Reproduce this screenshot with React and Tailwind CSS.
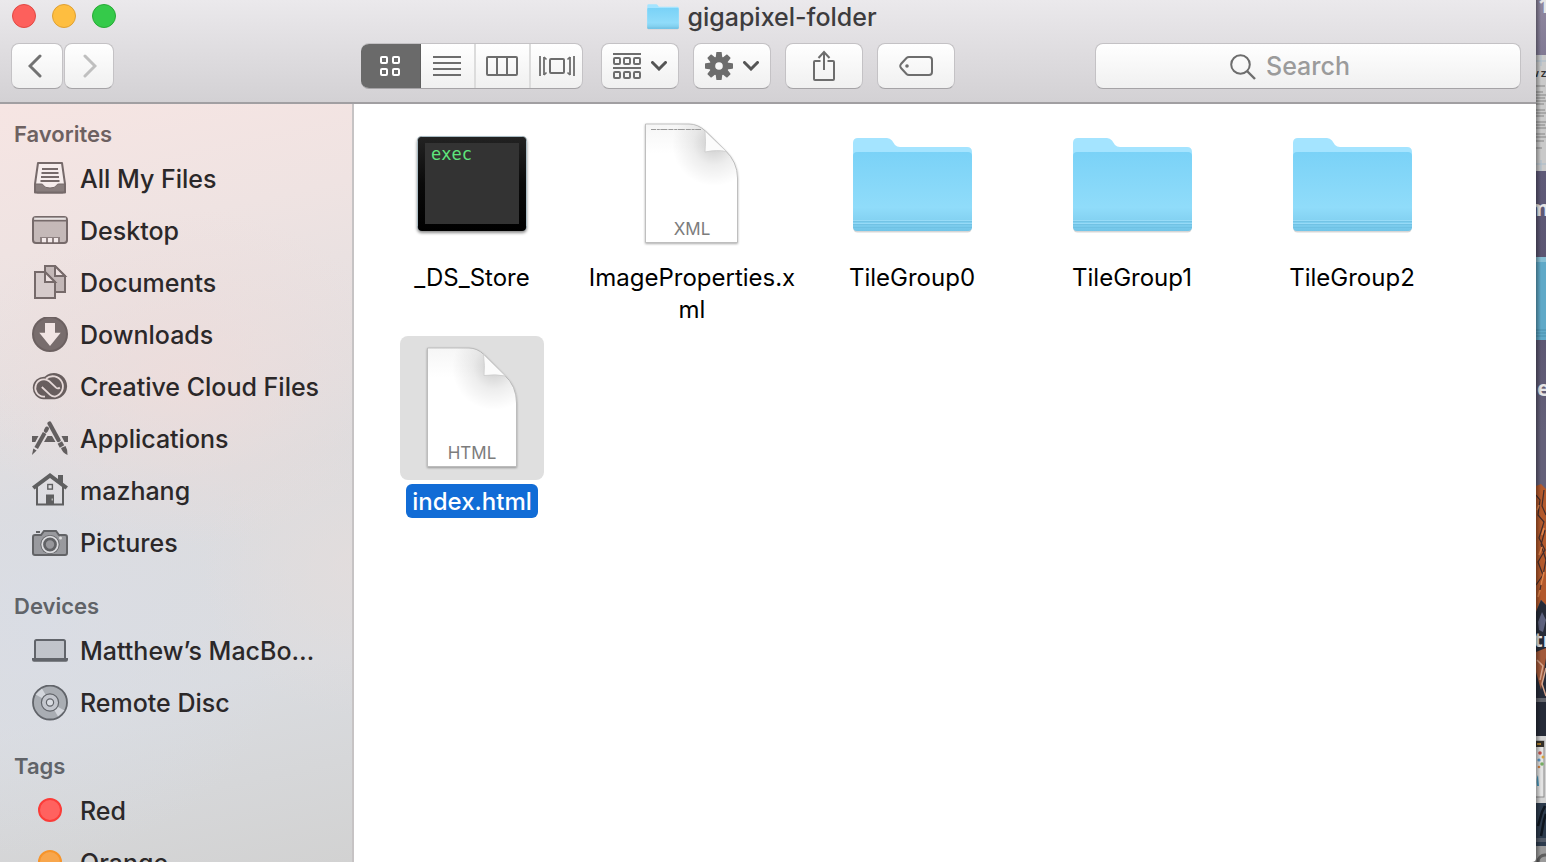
import React from "react";

const ink = "#6d6d6d";

/* ---------- Toolbar icons ---------- */

function Chevron({ dir = "down", className }) {
  const points = { left: "12,2 2,12 12,22", right: "2,2 12,12 2,22" };
  if (dir === "down") {
    return (
      <svg viewBox="0 0 16 10" className="h-[10px] w-4" fill="none" stroke="#555" strokeWidth="3">
        <polyline points="1.5,1.5 8,8 14.5,1.5" strokeLinecap="round" />
      </svg>
    );
  }
  return (
    <svg viewBox="0 0 14 24" className={`h-6 w-[14px] ${className}`} fill="none" stroke="currentColor" strokeWidth="3" strokeLinecap="round">
      <polyline points={points[dir]} />
    </svg>
  );
}

const IconsView = () => (
  <svg viewBox="0 0 20 20" className="size-5" fill="none" stroke="#fff" strokeWidth="2">
    {[1, 13].map((y) => [1, 13].map((x) => <rect key={`${x}${y}`} x={x} y={y} width="6" height="6" rx="1" />))}
  </svg>
);

const ListView = () => (
  <svg viewBox="0 0 28 20" className="h-5 w-7" stroke={ink} strokeWidth="2">
    <path d="M0 1H28M0 7H28M0 13H28M0 19H28" />
  </svg>
);

const ColumnsView = () => (
  <svg viewBox="0 0 32 20" className="h-5 w-8" fill="none" stroke={ink} strokeWidth="2">
    <rect x="1" y="1" width="30" height="18" rx="1" />
    <path d="M11 1V19M21 1V19" />
  </svg>
);

const FlowView = () => (
  <svg viewBox="0 0 36 20" className="h-5 w-9" fill="none" stroke={ink} strokeWidth="2">
    <rect x="11" y="3" width="14" height="14" rx="1" />
    <path d="M1 0V20M35 0V20" strokeWidth="1.8" />
    <path d="M5 1V19M31 1V19" strokeWidth="1.8" />
    <path d="M5 1L7.500 3.500M5 19L7.500 16.500M31 1L28.500 3.500M31 19L28.500 16.500" strokeWidth="1.6" />
  </svg>
);

const ArrangeIcon = () => (
  <svg viewBox="0 0 28 28" className="size-7" fill="none" stroke={ink} strokeWidth="2">
    <path d="M0 2H28M0 16H28" />
    {[6, 20].map((y) => [1, 11, 21].map((x) => <rect key={`${x}-${y}`} x={x} y={y} width="6" height="6" rx="1" />))}
  </svg>
);

const GearIcon = () => (
  <svg viewBox="0 0 28 28" className="size-7">
    <g fill={ink}>
      {[0, 45, 90, 135].map((a) => (
        <path key={a} d="M11.3 0.6Q11.4 0 12 0H16Q16.6 0 16.7 .6L17.4 6V22L16.7 27.4Q16.6 28 16 28H12Q11.4 28 11.3 27.4L10.6 22V6Z" transform={`rotate(${a} 14 14)`} />
      ))}
      <circle cx="14" cy="14" r="9.500" />
    </g>
    <circle cx="14" cy="14" r="3.8" fill="#f7f7f7" />
  </svg>
);

const ShareIcon = () => (
  <svg viewBox="0 0 24 32" className="h-8 w-6" fill="none" stroke={ink} strokeWidth="2">
    <path d="M8.5 11H3Q2 11 2 12V29Q2 30 3 30H21Q22 30 22 29V12Q22 11 21 11H15.500" />
    <path d="M12 20V2.500M6.500 8L12 2L17.500 8" />
  </svg>
);

const TagIcon = () => (
  <svg viewBox="0 0 34 20" className="h-5 w-[34px]" fill="none" stroke={ink} strokeWidth="2">
    <path d="M10 1H30Q33 1 33 4V16Q33 19 30 19H10Q8.500 19 7.500 18L2 12Q.5 10 2 8L7.500 2Q8.500 1 10 1Z" />
    <circle cx="8" cy="10" r="1.8" fill={ink} stroke="none" />
  </svg>
);

const SearchIcon = () => (
  <svg viewBox="0 0 26 26" className="size-[26px] shrink-0" fill="none" stroke={ink} strokeWidth="2">
    <circle cx="10.500" cy="10.500" r="9.300" />
    <path d="M17 17L25 25" strokeWidth="2.400" />
  </svg>
);

/* ---------- Sidebar icons ---------- */

function Glyph({ children }) {
  return (
    <svg viewBox="0 0 36 36" className="size-9 shrink-0" fill="none" stroke="currentColor" strokeWidth="2">
      {children}
    </svg>
  );
}

const AllFilesIcon = () => (
  <Glyph>
    <path d="M6 2H30L33 23V31.500H3V23Z" fill="#fff" fillOpacity=".35" strokeLinejoin="round" />
    <path d="M3 23H9.500Q11 23 11.500 24.500Q13 27 18 27Q23 27 24.500 24.500Q25 23 26.500 23H33L32.500 30Q32.300 32 30.500 32H5.500Q3.700 32 3.500 30Z" fill="currentColor" fillOpacity=".85" strokeWidth="1" />
    <path d="M10 8H26M9.500 12H26.500M9 16H27M8.500 20H27.500" />
  </Glyph>
);

const DesktopIcon = () => (
  <Glyph>
    <rect x="1" y="4" width="34" height="26" rx="3" fill="currentColor" fillOpacity=".35" />
    <path d="M2 5.500H34" stroke="#fff" strokeOpacity=".6" />
    <path d="M1 7.800H35" strokeWidth="1.600" />
    <rect x="8" y="24" width="20" height="6" fill="currentColor" stroke="none" fillOpacity=".7" />
    <path d="M10 25H14V29.300H10ZM16 25H20V29.300H16ZM22 25H26V29.300H22Z" fill="#f3eaea" stroke="none" />
  </Glyph>
);

const DocumentsIcon = () => (
  <Glyph>
    <path d="M13 1H23L33 11V27H13Z" fill="currentColor" fillOpacity=".35" />
    <path d="M23 1V11H33Z" fill="#efe3e3" />
    <path d="M3 7H13L23 17V33H3Z" fill="#d6cbcb" />
    <path d="M13 7V17H23Z" fill="#efe3e3" />
  </Glyph>
);

const DownloadsIcon = () => (
  <Glyph>
    <circle cx="18" cy="17" r="17" fill="currentColor" fillOpacity=".9" />
    <path d="M13 6H23V15.700H28.700L18 29L7.300 15.700H13Z" fill="#f1e5e4" stroke="none" />
  </Glyph>
);

const CloudIcon = () => (
  <Glyph>
    <path d="M11.500 30.300A11.200 11.200 0 1 1 12.700 7.700A13.200 13.200 0 1 1 23 30.300Z" fill="currentColor" stroke="none" />
    <path d="M13 27.600H11.500A8.600 8.600 0 1 1 17.300 12.300L24 18.600Q26 20.300 27.800 18.500M14 9.700A10.300 10.300 0 1 1 23 27.600Q20 27.600 18.200 25.900L9.800 18" stroke="#e6d9d8" strokeWidth="1.800" />
  </Glyph>
);

const ApplicationsIcon = () => (
  <Glyph>
    <path d="M0 15H6.500L3.300 21H0ZM15.500 15H20L23.500 21H12ZM29.500 15H36V21H32.500Z" fill="currentColor" stroke="none" />
    <path d="M17.500 2.500L26.500 19" strokeWidth="4.200" strokeLinecap="round" />
    <path d="M27.800 21.500L30 25.500" strokeWidth="5" />
    <path d="M29 27L33.500 25Q36 29 35.500 34Q30.500 32 29 27Z" fill="currentColor" stroke="none" />
    <path d="M15 7.500L13.800 9.800" strokeWidth="4" strokeLinecap="round" />
    <path d="M12.600 12L4.200 27" strokeWidth="4" />
    <path d="M1.300 27.500L4.600 29.500L0 34Z" fill="currentColor" stroke="none" />
  </Glyph>
);

const HomeIcon = () => (
  <Glyph>
    <path d="M5 14V31.500H31V14" />
    <path d="M18 0L36 13.500L33.500 16.500L18 5L2.500 16.500L0 13.500Z" fill="currentColor" stroke="none" />
    <path d="M26 2H31V11.500L26 7.500Z" fill="currentColor" stroke="none" />
    <rect x="15.800" y="11.500" width="4.600" height="4.600" strokeWidth="1.400" />
    <path d="M14 21.500H22V31.500H14Z" fill="currentColor" stroke="none" />
    <path d="M20.200 25.500V27.500" stroke="#ddd" strokeWidth="1" />
  </Glyph>
);

const CameraIcon = () => (
  <Glyph>
    <path d="M3 10H9L12 6H24L27 10H33Q35 10 35 12V28Q35 30 33 30H3Q1 30 1 28V12Q1 10 3 10Z" fill="currentColor" fillOpacity=".55" />
    <path d="M4 7H8" />
    <circle cx="18" cy="19.500" r="9.600" fill="currentColor" stroke="none" />
    <circle cx="18" cy="19.500" r="7.800" stroke="#dcdcdf" strokeWidth="1.800" />
    <circle cx="18" cy="19.500" r="5" fill="#97979b" strokeWidth="1.600" />
    <circle cx="28.500" cy="13" r="1.500" fill="#ddd" stroke="none" />
  </Glyph>
);

const LaptopIcon = () => (
  <Glyph>
    <rect x="3" y="7" width="30" height="20" rx="1.500" fill="currentColor" fillOpacity=".2" />
    <path d="M0 25H36V26.500Q36 28.700 34 28.700H2Q0 28.700 0 26.500Z" fill="currentColor" stroke="none" />
  </Glyph>
);

const DiscIcon = () => (
  <Glyph>
    <circle cx="18" cy="17.500" r="17" fill="#a9adb3" strokeWidth="1.800" />
    <path d="M18 17.500L3.500 9.500L10 3.500ZM18 17.500L32.500 25.500L26 31.500Z" fill="#d3d6dc" stroke="none" />
    <circle cx="18" cy="17.500" r="8.600" fill="#c3c6cd" strokeWidth="1.200" />
    <circle cx="18" cy="17.500" r="3.600" fill="#d9dce2" strokeWidth="1.200" />
  </Glyph>
);

const tagTone = {
  red: "border-[#fb3c38] bg-[#ff625f]",
  orange: "border-[#f7942a] bg-[#f8a64c]",
};

function TagDot({ tone }) {
  return (
    <span className="flex w-9 shrink-0 justify-center pb-[2px]">
      <span className={`size-6 rounded-full border-2 ${tagTone[tone]}`} />
    </span>
  );
}

/* ---------- File icons ---------- */

function FolderShape({ viewBox, className, id }) {
  return (
    <svg viewBox={viewBox} className={className}>
      <defs>
        <linearGradient id={id} x1="0" y1="0" x2="0" y2="1">
          <stop offset="0" stopColor="#7ad2f7" />
          <stop offset=".7" stopColor="#90dcfa" />
          <stop offset=".86" stopColor="#84d2f2" />
          <stop offset="1" stopColor="#72c5e8" />
        </linearGradient>
      </defs>
      <rect x="13.500" y="100" width="118" height="20.500" rx="4" fill="#000" opacity=".16" />
      <path d="M13 112V31Q13 26 18 26H47Q50 26 52 28.500L55 33Q57 35 60 35H127Q132 35 132 40V112Z" fill="#a4e4ff" />
      <path d="M13 44Q13 40 17 40H128Q132 40 132 44V115Q132 119 128 119H17Q13 119 13 115Z" fill={`url(#${id})`} />
      <path d="M13 109.500H132M13 112.500H132M13 115.500H132" stroke="#67b9dc" strokeOpacity=".55" />
      <path d="M13 108.500H132M13 111.500H132" stroke="#a6e3fb" strokeOpacity=".6" />
    </svg>
  );
}

const ExecIcon = () => (
  <svg viewBox="0 0 144 144" className="size-36">
    <defs>
      <linearGradient id="bezel" x1="0" y1="0" x2="0" y2="1">
        <stop offset="0" stopColor="#222" />
        <stop offset=".5" stopColor="#0a0a0a" />
        <stop offset="1" stopColor="#000" />
      </linearGradient>
      <filter id="bezelShadow" x="-10%" y="-10%" width="120%" height="125%">
        <feDropShadow dx="0" dy="2" stdDeviation="1.500" floodOpacity=".45" />
      </filter>
    </defs>
    <rect x="17.500" y="24.500" width="109" height="94" rx="4" fill="url(#bezel)" stroke="#a9bcc4" strokeWidth="1" filter="url(#bezelShadow)" />
    <rect x="18" y="25" width="108" height="94" rx="4" fill="url(#bezel)" />
    <rect x="25" y="31" width="94" height="81" fill="#333" />
    <text x="31" y="48" fill="#5fe57c" fontSize="17" fontFamily="DejaVu Sans Mono, monospace">exec</text>
  </svg>
);

function PageIcon({ kind }) {
  const xml = kind === "XML";
  const outline = xml
    ? "M25.5 12H69Q78 12 85.500 19L105 38Q117.500 50 117.500 66V130.500H25.500Z"
    : "M27.500 12H69Q77 12 84 18.500L104.500 39Q116.500 50 116.500 67V130.500H27.500Z";
  const fold = xml
    ? "M85 19Q86 30 85 40Q97 37.500 106.500 39.500Z"
    : "M83.500 18.500Q85 30 84 39.500Q96 38 105.500 40Z";
  return (
    <svg viewBox="0 0 144 144" className="size-36">
      <defs>
        <linearGradient id={`paper${kind}`} x1="0" y1="0" x2="0" y2="1">
          <stop offset="0" stopColor="#f6f6f6" />
          <stop offset=".25" stopColor="#fff" />
        </linearGradient>
        <radialGradient id={`curl${kind}`} cx="94" cy="32" r="42" gradientUnits="userSpaceOnUse">
          <stop offset="0" stopColor="#000" stopOpacity=".2" />
          <stop offset=".5" stopColor="#000" stopOpacity=".07" />
          <stop offset="1" stopColor="#000" stopOpacity="0" />
        </radialGradient>
        <filter id={`drop${kind}`} x="-10%" y="-10%" width="120%" height="120%">
          <feDropShadow dx="0" dy="1" stdDeviation="1.200" floodOpacity=".35" />
        </filter>
      </defs>
      <path d={outline} fill={`url(#paper${kind})`} stroke="#b4b4b4" strokeWidth=".8" filter={`url(#drop${kind})`} />
      <path d={outline} fill={`url(#curl${kind})`} />
      <path d={fold} fill="#fbfbfb" stroke="#ccc" strokeWidth=".8" />
      {xml && <path d="M31 17.500H81" stroke="#9a9a9a" strokeWidth="1" strokeDasharray="5 .8 3 .6 7 1" />}
      <text x="72" y="123" textAnchor="middle" fill="#7c7c7c" fontSize="17" fontFamily="Inter, sans-serif">{kind}</text>
    </svg>
  );
}

/* ---------- Data ---------- */

const sections = [
  {
    title: "Favorites",
    tone: "text-[#6d6161]",
    items: [
      { name: "All My Files", icon: <AllFilesIcon />, ink: "text-[#766a6a]" },
      { name: "Desktop", icon: <DesktopIcon />, ink: "text-[#766a6a]" },
      { name: "Documents", icon: <DocumentsIcon />, ink: "text-[#766a6a]" },
      { name: "Downloads", icon: <DownloadsIcon />, ink: "text-[#6c6161]" },
      { name: "Creative Cloud Files", icon: <CloudIcon />, ink: "text-[#685e5e]" },
      { name: "Applications", icon: <ApplicationsIcon />, ink: "text-[#625e5f]" },
      { name: "mazhang", icon: <HomeIcon />, ink: "text-[#5f5f60]" },
      { name: "Pictures", icon: <CameraIcon />, ink: "text-[#626366]" },
    ],
  },
  {
    title: "Devices",
    tone: "text-[#606368]",
    items: [
      { name: "Matthew’s MacBo…", icon: <LaptopIcon />, ink: "text-[#61646a]" },
      { name: "Remote Disc", icon: <DiscIcon />, ink: "text-[#61646a]" },
    ],
  },
  {
    title: "Tags",
    tone: "text-[#606368]",
    items: [
      { name: "Red", icon: <TagDot tone="red" />, ink: "" },
      { name: "Orange", icon: <TagDot tone="orange" />, ink: "" },
    ],
  },
];

const folderIcon = (id) => <FolderShape id={id} viewBox="0 0 144 144" className="size-36" />;

const files = [
  { name: "_DS_Store", icon: <ExecIcon /> },
  { name: "ImageProperties.xml", icon: <PageIcon kind="XML" /> },
  { name: "TileGroup0", icon: folderIcon("tile0") },
  { name: "TileGroup1", icon: folderIcon("tile1") },
  { name: "TileGroup2", icon: folderIcon("tile2") },
  { name: "index.html", icon: <PageIcon kind="HTML" />, selected: true },
];

/* ---------- Layout ---------- */

const face =
  "flex items-center justify-center rounded-lg border border-[#c4c2c5] border-b-[#a5a3a6] bg-linear-to-b from-white to-[#f0f0f0]";

function ToolButton({ label, children }) {
  return (
    <button aria-label={label} className={`${face} h-[46px] w-[78px] gap-[10px]`}>
      {children}
    </button>
  );
}

function Header() {
  return (
    <header className="shrink-0 border-b-2 border-[#a19fa2] bg-linear-to-b from-[#ebe9ec] to-[#d3d1d4]">
      <div className="grid h-[34px] grid-cols-[1fr_auto_1fr] items-center">
        <div className="flex gap-4 pb-[2px] pl-3">
          <button aria-label="Close" className="size-6 rounded-full border border-[#e14843] bg-[#fd605c]" />
          <button aria-label="Minimize" className="size-6 rounded-full border border-[#dfa033] bg-[#febe40]" />
          <button aria-label="Zoom" className="size-6 rounded-full border border-[#27aa35] bg-[#35ca4a]" />
        </div>
        <h1 className="flex items-center gap-2 pr-3 text-[25px] font-medium leading-[34px] text-[#3d3c3e]">
          <FolderShape id="titleFolder" viewBox="12 25 121 98" className="h-[26px] w-8" />
          gigapixel-folder
        </h1>
      </div>
      <div className="flex items-start pt-[9px] pb-[13px] pr-[15px]">
        <div className="flex w-[361px] shrink-0 gap-px pl-[11px]">
          <button aria-label="Back" className={`${face} h-[46px] w-[52px] pr-1`}>
            <Chevron dir="left" className="text-[#727272]" />
          </button>
          <button aria-label="Forward" className={`${face} h-[46px] w-[50px] pl-[2px]`}>
            <Chevron dir="right" className="text-[#bfbfbf]" />
          </button>
        </div>
        <div className="flex shrink-0 gap-[14px]">
          <div role="group" aria-label="View" className={`${face} mr-1 h-[46px] w-[222px] overflow-hidden border-l-0`}>
            <button aria-label="Icons" aria-pressed="true" className="-my-px flex h-[46px] w-[60px] items-center justify-center border-r border-[#5e5e5e] bg-[#6a6a6a] pr-[2px]">
              <IconsView />
            </button>
            <button aria-label="List" className="flex h-full flex-1 items-center justify-center pr-[2px]">
              <ListView />
            </button>
            <button aria-label="Columns" className="flex h-full flex-1 items-center justify-center border-l-2 border-[#dcdcdc] pr-[2px]">
              <ColumnsView />
            </button>
            <button aria-label="Cover Flow" className="flex h-full flex-1 items-center justify-center border-l-2 border-[#dcdcdc]">
              <FlowView />
            </button>
          </div>
          <ToolButton label="Arrange">
            <ArrangeIcon />
            <Chevron />
          </ToolButton>
          <ToolButton label="Action">
            <GearIcon />
            <Chevron />
          </ToolButton>
          <ToolButton label="Share">
            <ShareIcon />
          </ToolButton>
          <ToolButton label="Edit Tags">
            <TagIcon />
          </ToolButton>
        </div>
        <label className={`${face} ml-[140px] h-[46px] min-w-0 flex-1 gap-[10px] pt-[2px]`}>
          <SearchIcon />
          <input
            type="search"
            aria-label="Search"
            placeholder="Search"
            className="w-[120px] appearance-none bg-transparent text-[25px] font-medium outline-none placeholder:text-[#9b9b9b] [&::-webkit-search-cancel-button]:hidden"
          />
        </label>
      </div>
    </header>
  );
}

function Sidebar() {
  return (
    <nav className="flex w-[354px] shrink-0 flex-col gap-[18px] overflow-hidden border-r-2 border-[#c6c3c4] bg-[radial-gradient(ellipse_220px_170px_at_52%_36%,#f0dcdaaa,transparent),radial-gradient(ellipse_150px_150px_at_100%_61%,#e6dddb99,transparent),radial-gradient(ellipse_260px_240px_at_10%_68%,#d9dde6bb,transparent),linear-gradient(168deg,#f6e5e3_0%,#efe3e2_18%,#dddcde_50%,#dadce0_75%,#d2d2d2_100%)] pt-[11px]">
      {sections.map((s) => (
        <section key={s.title}>
          <h2 className={`pl-[14px] text-[22px] font-semibold leading-[38px] ${s.tone}`}>{s.title}</h2>
          <ul>
            {s.items.map((item) => (
              <li key={item.name}>
                <a href="#" className="flex h-[52px] items-center gap-3 pl-8 text-[25px] font-medium text-[#2b2829]">
                  <span className={item.ink}>{item.icon}</span>
                  <span className="whitespace-nowrap pt-[2px]">{item.name}</span>
                </a>
              </li>
            ))}
          </ul>
        </section>
      ))}
    </nav>
  );
}

function Files() {
  return (
    <main className="grid flex-1 grid-cols-[repeat(auto-fill,220px)] content-start bg-white pt-2 pl-2">
      {files.map((f) => (
        <button key={f.name} className="flex h-56 flex-col items-center gap-1">
          <span className={`rounded-lg ${f.selected ? "bg-[#dfdfdf]" : ""}`}>{f.icon}</span>
          <span
            className={`rounded-md px-[6px] pt-[2px] text-[24px] leading-8 break-all ${
              f.selected ? "bg-[#116cd6] font-medium text-white" : "text-black"
            }`}
          >
            {f.name}
          </span>
        </button>
      ))}
    </main>
  );
}

/* The sliver of desktop that shows beside the window */
function Desktop() {
  return (
    <svg viewBox="0 0 10 862" preserveAspectRatio="xMinYMin slice" className="h-full w-[10px] shrink-0">
      <defs>
        <linearGradient id="sky" x1="0" y1="0" x2="0" y2="1">
          <stop offset="0" stopColor="#9088a0" />
          <stop offset=".2" stopColor="#5f5a78" />
          <stop offset=".35" stopColor="#5a5470" />
          <stop offset=".5" stopColor="#646079" />
          <stop offset="1" stopColor="#626079" />
        </linearGradient>
        <linearGradient id="edge">
          <stop offset="0" stopColor="#000" stopOpacity=".35" />
          <stop offset="1" stopColor="#000" stopOpacity="0" />
        </linearGradient>
      </defs>
      <rect width="10" height="862" fill="url(#sky)" />
      <g fontFamily="Open Sans, sans-serif" fontWeight="700" fill="#e6e6e6">
        <text x="2" y="13" fontSize="22">1</text>
        <text x="-8" y="216" fontSize="22">m</text>
        <text x="1" y="396" fontSize="22">e</text>
      </g>
      <rect y="55" width="10" height="116" fill="#c9c9c9" />
      <path d="M0 61H10M5 55V66M0 164H10M5 160V171" stroke="#a9bccb" />
      <text x="-6" y="77" fontSize="9" fontWeight="700" fontFamily="Open Sans, sans-serif" fill="#333">W Z</text>
      <path d="M0 86H9M0 92H7M0 95H10M0 98H9M0 101H10M0 104H8M0 110H9M0 113H10M0 116H8M0 122H10M0 125H9M0 128H10M0 134H9M0 137H10M0 141H8M0 148H6" stroke="#858585" />
      <rect y="257" width="10" height="83" fill="#5fa9c8" />
      <rect y="257" width="10" height="5" fill="#86bfd4" />
      <path d="M0 330H10M0 333H10M0 336H10" stroke="#4a90af" />
      <path d="M0 486L5 484L10 489V605L5 600L0 612Z" fill="#b3592c" />
      <path d="M0 495L4 500L2 515L8 522L3 538L9 550L2 562L7 575L0 585M8 490L6 506L10 515M9 530L5 545L10 560L4 590" fill="none" stroke="#432c2b" strokeWidth="1.200" />
      <path d="M1 510L3 505M6 535L8 528M3 555L6 547M5 585L8 572M2 597L4 590" stroke="#e0834a" strokeWidth="1.600" />
      <path d="M0 612L5 600L10 605V738H0Z" fill="#262b38" />
      <path d="M2 622L6 612L10 620L7 632L3 630Z" fill="#5d617d" />
      <text x="-2" y="647" fontSize="20" fontWeight="700" fontFamily="Open Sans, sans-serif" fill="#e6e6e6">tr</text>
      <path d="M0 652L10 648V658L5 690L0 672Z" fill="#a2593a" />
      <path d="M1 660L7 666L4 680M10 668L6 684L10 696" fill="none" stroke="#d5a58d" strokeWidth="1.500" />
      <rect y="698" width="10" height="4" fill="#62646c" />
      <rect y="736" width="10" height="67" fill="#d2d2d2" />
      <rect x="-2" y="741" width="10" height="56" fill="#e3e3e3" stroke="#8b8b8b" />
      <rect y="741" width="8" height="6" fill="#34302a" />
      <path d="M1 744H5" stroke="#d49b34" strokeWidth="1.500" />
      <g>
        <circle cx="4" cy="753" r="1.800" fill="#c75249" />
        <circle cx="7" cy="757" r="1.500" fill="#d6a442" />
        <circle cx="3" cy="760" r="1.600" fill="#5d9ccc" />
        <circle cx="6" cy="764" r="1.800" fill="#75ad62" />
        <circle cx="3" cy="767" r="1.300" fill="#d98845" />
      </g>
      <path d="M1 786Q0 778 2 775L3 786Z" fill="#4a9bc1" />
      <rect y="803" width="10" height="43" fill="#2d3b4d" />
      <path d="M2 826L6 812L9 806M5 836L8 820L10 814" fill="none" stroke="#0f1620" strokeWidth="2.500" />
      <rect y="838" width="10" height="4" fill="#535b68" />
      <rect y="846" width="10" height="16" fill="#9b9b9b" />
      <circle cx="9" cy="862" r="7" fill="none" stroke="#5e5e5e" strokeWidth="3" />
      <rect width="5" height="862" fill="url(#edge)" />
    </svg>
  );
}

export default function App() {
  return (
    <div className="flex h-screen overflow-hidden bg-[#777] font-['Inter','Liberation_Sans',sans-serif]">
      <div className="flex min-w-0 flex-1 flex-col overflow-hidden rounded-br-sm">
        <Header />
        <div className="flex min-h-0 flex-1">
          <Sidebar />
          <Files />
        </div>
      </div>
      <Desktop />
    </div>
  );
}
